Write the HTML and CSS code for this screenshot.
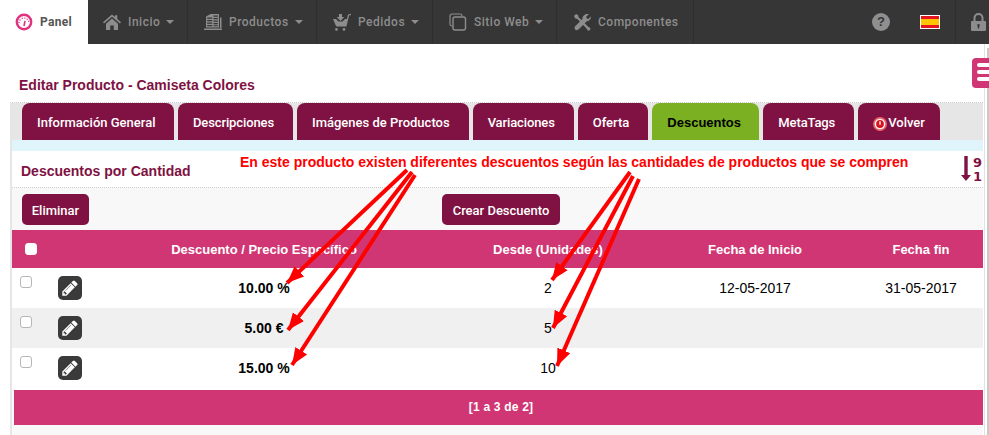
FILE: index.html
```html
<!DOCTYPE html>
<html lang="es">
<head>
<meta charset="utf-8">
<title>Editar Producto</title>
<link rel="stylesheet" href="styles.css">
</head>
<body>
<header class="topbar">
  <a class="nav-item nav-panel">
    <svg class="icon-panel" viewBox="0 0 18 18"><circle cx="9" cy="9" r="7.2" fill="#fff" stroke="#e0327f" stroke-width="2.4"/><path d="M4 10a5 5 0 0 1 10 0" fill="none" stroke="#e0327f" stroke-width="1.2" stroke-dasharray="1.2 1.4"/><path d="M9 13l1-5" stroke="#e0327f" stroke-width="1.6"/></svg>
    <span>Panel</span>
  </a>
  <a class="nav-item nav-inicio">
    <svg class="icon" viewBox="0 0 18 18"><path class="ic" d="M9 1.5l3 2.6V2.300h2.300v3.800L18 9.300l-1 1.200L9 3.700 1 10.500 0 9.300zM3 10.700L9 5.500l6 5.200V17h-4.200v-4.500H7.200V17H3z"/></svg>
    <span>Inicio</span><i class="caret"></i>
  </a>
  <a class="nav-item nav-productos">
    <svg class="icon" viewBox="0 0 18 18"><path class="ic" fill-rule="evenodd" d="M2 3.500L6.500 1H15v13.500H2zM3.200 4.500v1.300h5V4.500zM9.500 2.500v1.300h4.400V2.500zM3.200 7v1.300h5V7zM9.500 5v1.300h4.400V5zM3.200 9.500v1.300h5V9.500zM9.500 7.500v1.300h4.400V7.500zM3.200 12v1.300h5V12zM9.500 10v1.300h4.400V10zM9.500 12.300v1h4.400v-1zM16 4.500h1.500V15H16zM0 15.500h18V17H0z"/></svg>
    <span>Productos</span><i class="caret"></i>
  </a>
  <a class="nav-item nav-pedidos">
    <svg class="icon" viewBox="0 0 18 18"><path class="ic" d="M6 1h3v3h2.300L7.500 8 3.700 4H6zM0 6h3l2.500 2.500h4L12 6h2l-1.800 7H3zM15 1.500l3-.8.300 1.100-2.200.6-2.700 11.100H3.500v-1.200h8.900zM3.500 15a1.400 1.400 0 1 1 0 2.800 1.400 1.400 0 0 1 0-2.800zm7.500 0a1.400 1.400 0 1 1 0 2.800 1.400 1.400 0 0 1 0-2.800z"/></svg>
    <span>Pedidos</span><i class="caret"></i>
  </a>
  <a class="nav-item nav-sitio">
    <svg class="icon" viewBox="0 0 18 18"><path d="M3.500 13H3A2 2 0 0 1 1 11V3a2 2 0 0 1 2-2h8a2 2 0 0 1 2 2v.5" fill="none" stroke="#8d8d8d" stroke-width="1.200"/><rect x="4" y="4" width="12.500" height="13" rx="2" fill="none" stroke="#8d8d8d" stroke-width="1.400"/></svg>
    <span>Sitio Web</span><i class="caret"></i>
  </a>
  <a class="nav-item nav-comp">
    <svg class="icon" viewBox="0 0 18 18"><path class="ic" d="M1 3l2-2 2 1 .6 2.300L15.500 14l1.500.7.500 1.500-1.500 1.500-1.500-.5-.7-1.500L4.400 5.900 2 5.200zM15.800 1.200l-2.600 2.600.5 1.700 1.700.5 2.400-2.400c.4 2-.9 4.900-4 4.600L6 16c-1 1.200-2.600 1.600-3.800.5-1.100-1.200-.8-2.600.4-3.700L9.400 6.200C9 3 12.800.3 15.800 1.200z"/></svg>
    <span>Componentes</span>
  </a>
  <div class="nav-tools">
    <span class="help">?</span>
    <span class="flag"></span>
    <span class="lock-cell">
      <svg class="icon-lock" viewBox="0 0 15 18"><path d="M3.500 8V5a4 4 0 0 1 8 0v3" fill="none" stroke="#8d8d8d" stroke-width="2"/><path class="ic" fill-rule="evenodd" d="M1 8h13a1 1 0 0 1 1 1v8a1 1 0 0 1-1 1H1a1 1 0 0 1-1-1V9a1 1 0 0 1 1-1zm6.500 3a1.300 1.300 0 0 0-.7 2.400V15.500h1.400v-2.100a1.300 1.300 0 0 0-.7-2.400z"/></svg>
    </span>
  </div>
</header>

<main class="page">
  <h1 class="page-title">Editar Producto - Camiseta Colores</h1>
  <section class="panel">
    <nav class="tabs">
      <a class="tab tab-wide">Información General</a>
      <a class="tab tab-tight">Descripciones</a>
      <a class="tab">Imágenes de Productos</a>
      <a class="tab tab-tight">Variaciones</a>
      <a class="tab">Oferta</a>
      <a class="tab tab-active">Descuentos</a>
      <a class="tab tab-tight">MetaTags</a>
      <a class="tab tab-back"><svg class="icon-power" viewBox="0 0 14 14"><circle cx="7" cy="7" r="7" fill="#f0616a"/><circle cx="7" cy="7" r="4.600" fill="#d8121f" stroke="#fff" stroke-width="1.400"/><path d="M7 4.300v3.400" stroke="#fff" stroke-width="1.400"/></svg>Volver</a>
    </nav>
    <div class="strip"></div>
    <div class="section-head">
      <h2 class="section-title">Descuentos por Cantidad</h2>
      <div class="sort">
        <svg class="sort-arrow" viewBox="0 0 10 25"><path d="M3.300 0h3.400v19H10l-5 6-5-6h3.300z"/></svg>
        <div class="sort-nums"><span>9</span><span>1</span></div>
      </div>
    </div>
    <div class="toolbar">
      <button class="btn btn-delete">Eliminar</button>
      <button class="btn btn-create">Crear Descuento</button>
    </div>
    <table class="grid">
      <colgroup>
        <col class="c-check"><col class="c-edit"><col class="c-desc"><col class="c-from"><col class="c-start"><col class="c-end">
      </colgroup>
      <thead>
        <tr>
          <th class="th-check"><span class="check check-head"></span></th>
          <th></th>
          <th>Descuento / Precio Específico</th>
          <th>Desde (Unidades)</th>
          <th>Fecha de Inicio</th>
          <th>Fecha fin</th>
        </tr>
      </thead>
      <tbody>
        <tr>
          <td class="td-check"><span class="check"></span></td>
          <td class="td-edit"><a class="edit"><svg viewBox="0 0 1792 1792"><use href="#pencil"/></svg></a></td>
          <td class="strong">10.00 %</td><td>2</td><td>12-05-2017</td><td>31-05-2017</td>
        </tr>
        <tr class="alt">
          <td class="td-check"><span class="check"></span></td>
          <td class="td-edit"><a class="edit"><svg viewBox="0 0 1792 1792"><use href="#pencil"/></svg></a></td>
          <td class="strong">5.00 €</td><td>5</td><td></td><td></td>
        </tr>
        <tr class="last">
          <td class="td-check"><span class="check"></span></td>
          <td class="td-edit"><a class="edit"><svg viewBox="0 0 1792 1792"><use href="#pencil"/></svg></a></td>
          <td class="strong">15.00 %</td><td>10</td><td></td><td></td>
        </tr>
      </tbody>
    </table>
    <div class="pager">[1 a 3 de 2]</div>
  </section>
</main>

<svg class="defs" width="0" height="0"><defs>
  <path id="pencil" d="M491 1536l91-91-235-235-91 91v107h128v128h107zm523-928q0-22-22-22-10 0-17 7l-542 542q-7 7-7 17 0 22 22 22 10 0 17-7l542-542q7-7 7-17zm-54-192l416 416-832 832h-416v-416zm683 96q0 53-37 90l-166 166-416-416 166-165q36-38 90-38 53 0 91 38l235 234q37 39 37 91z"/>
  <marker id="head" markerUnits="userSpaceOnUse" markerWidth="18" markerHeight="16" refX="17" refY="8" orient="auto"><path d="M0 1L17 8 0 15z" fill="#ff0000"/></marker>
</defs></svg>

<svg class="arrows" viewBox="0 0 989 435">
  <line x1="407" y1="170" x2="287" y2="283"/>
  <line x1="412" y1="172" x2="288" y2="330"/>
  <line x1="415" y1="175" x2="292" y2="365"/>
  <line x1="630" y1="172" x2="552" y2="280"/>
  <line x1="633" y1="176" x2="553" y2="328"/>
  <line x1="639" y1="179" x2="557" y2="366"/>
</svg>
<p class="note">En este producto existen diferentes descuentos según las cantidades de productos que se compren</p>

<div class="side-line"></div>
<div class="side-thumb"></div>
<div class="float-menu"><i></i><i></i><i></i></div>
</body>
</html>
```
FILE: styles.css
```css
* { box-sizing: border-box; }
html, body { margin: 0; padding: 0; height: 435px; overflow: hidden; background: #fff; }
body { position: relative; font-family: "Liberation Sans", Arial, sans-serif; color: #000; }
.defs { position: absolute; }

.topbar { display: flex; height: 44px; background: #363636; font-family: Roboto, sans-serif; font-size: 12px; font-weight: 500; letter-spacing: .5px; color: #8d8d8d; }
.nav-item { display: flex; flex: none; align-items: center; padding-left: 16px; border-right: 1px solid #2e2e2e; }
.nav-panel { width: 88px; padding-left: 15px; background: #fff; color: #555; border: 0; letter-spacing: .3px; font-weight: 700; }
.nav-inicio { width: 100px; padding-left: 15px; }
.nav-productos { width: 129px; }
.nav-pedidos { width: 116px; }
.nav-sitio { width: 124px; }
.nav-comp { width: 137px; }
.icon { width: 18px; height: 18px; margin-right: 7px; flex: none; }
.ic { fill: #8d8d8d; }
.icon-panel { width: 18px; height: 18px; margin-right: 7px; flex: none; }
.caret { width: 0; height: 0; margin-left: 6px; border-left: 4px solid transparent; border-right: 4px solid transparent; border-top: 4px solid #8d8d8d; }
.nav-tools { display: flex; align-items: center; margin-left: auto; }
.help { width: 18px; height: 18px; border-radius: 50%; background: #8f8f8f; color: #363636; font: 700 13px/18px "Liberation Sans", sans-serif; text-align: center; letter-spacing: 0; }
.flag { width: 20px; height: 14px; margin: 0 15px 0 30px; border: 1px solid #fff; background: linear-gradient(#e5141f 0 25%, #ffc400 25% 75%, #e5141f 75%); }
.lock-cell { display: flex; align-items: center; height: 44px; width: 34px; padding-left: 15px; border-left: 1px solid #2e2e2e; }
.icon-lock { width: 15px; height: 18px; flex: none; }

.page { padding: 0 6px 0 10px; }
.page-title { margin: 0; padding: 33px 0 0 9px; height: 58px; font-size: 14px; line-height: 16px; font-weight: 700; color: #7f1242; }
.panel { border-top: 1px dotted #ccc; border-left: 2px solid #e6e6e6; height: 333px; background: #f8f8f8; }

.tabs { display: flex; gap: 4px; height: 37px; padding-left: 10px; background: #e6e6e6; }
.tab { display: flex; align-items: center; padding: 2px 19px 0 15px; border-radius: 8px 8px 0 0; background: #7f1242; color: #fff; font-family: Roboto, sans-serif; font-size: 13px; font-weight: 500; white-space: nowrap; }
.tab-wide { width: 152px; padding-right: 0; }
.tab-tight { letter-spacing: -.12px; }
.tab-active { width: 107px; padding-right: 0; background: #7ab021; color: #000; font-family: "Liberation Sans", sans-serif; font-weight: 700; }
.tab-back { gap: 1px; padding-right: 15px; }
.icon-power { width: 14px; height: 14px; margin-top: 2px; }
.strip { height: 11px; background: #e0f4fc; }

.section-head { display: flex; justify-content: space-between; align-items: center; height: 37px; padding: 3px 1px 0 9px; background: #fff; border-bottom: 1px dotted #ccc; }
.section-title { margin: 0; font-size: 14px; font-weight: 700; color: #7f1242; }
.sort { display: flex; gap: 2px; margin-top: -1px; }
.sort-arrow { width: 10px; height: 25px; fill: #7f1242; }
.sort-nums { display: flex; flex-direction: column; width: 9px; font: 700 13px/14px "DejaVu Sans", sans-serif; color: #7f1242; }

.toolbar { display: flex; height: 42px; padding: 6px 0 0 10px; gap: 353px; background: #f8f8f8; }
.btn { height: 31px; border: 0; border-radius: 5px; background: #7f1242; color: #fff; font-family: Roboto, sans-serif; font-size: 13px; font-weight: 500; padding: 1px 0 0; }
.btn-delete { width: 67px; }
.btn-create { width: 118px; }

.grid { width: 971px; border-collapse: collapse; table-layout: fixed; font-size: 14px; text-align: center; background: #fff; }
.c-check { width: 35px; } .c-edit { width: 36px; } .c-desc { width: 362px; } .c-from { width: 206px; } .c-start { width: 208px; } .c-end { width: 124px; }
.grid thead tr { height: 38px; background: #d13674; }
.grid th { padding: 0; font-size: 13px; font-weight: 700; color: #fff; }
.grid td { padding: 0; height: 40px; }
.grid .last td { height: 42px; padding-bottom: 3px; }
.grid .alt { background: #f0f0f0; }
.strong { font-weight: 700; }
.td-check, .th-check, .td-edit { vertical-align: top; text-align: left; }
.grid .th-check { vertical-align: middle; padding-left: 13px; }
.grid .td-check { padding: 8px 0 0 8px; }
.grid .td-edit { padding: 8px 0 0 11px; }
.check { display: block; width: 12px; height: 12px; border: 1px solid #b5b5b5; border-radius: 3px; background: #fff; }
.check-head { border-color: #fff; }
.edit { display: block; width: 24px; height: 24px; padding: 3px; border-radius: 5px; background: #3a3a3a; }
.edit svg { display: block; width: 18px; height: 18px; fill: #fff; }

.pager { margin-left: 2px; width: 969px; height: 35px; padding-left: 5px; background: #d13674; color: #fff; font-size: 12px; font-weight: 700; letter-spacing: .2px; line-height: 35px; text-align: center; }

.arrows { position: absolute; left: 0; top: 0; width: 989px; height: 435px; pointer-events: none; }
.arrows line { stroke: #ff0000; stroke-width: 4; marker-end: url(#head); }
.note { position: absolute; left: 240px; top: 154px; margin: 0; font-size: 14px; line-height: 16px; font-weight: 700; color: #ff0000; white-space: nowrap; }

.side-line { position: absolute; left: 984px; top: 44px; bottom: 0; width: 1px; background: #e2e2e2; }
.side-thumb { position: absolute; left: 987px; top: 48px; bottom: 0; width: 2px; background: #c8c8c8; }
.float-menu { position: absolute; left: 972px; top: 58px; width: 17px; height: 30px; padding: 5px 0 0 5px; border-radius: 4px 0 0 4px; background: #d13674; display: flex; flex-direction: column; gap: 3px; }
.float-menu i { display: block; height: 4px; background: #fff; border-radius: 2px 0 0 2px; }
```
